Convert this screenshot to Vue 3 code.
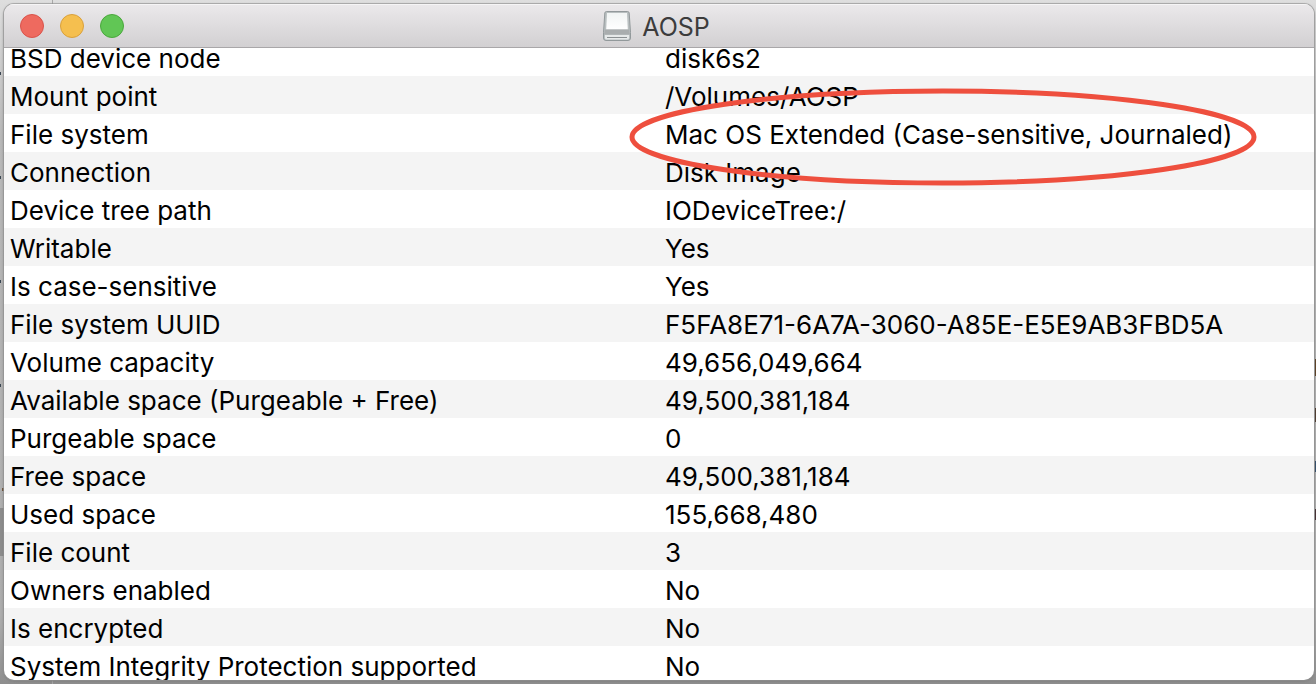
<script setup>
const controls = [
  { name: 'Close', kind: 'close' },
  { name: 'Minimize', kind: 'minimize' },
  { name: 'Zoom', kind: 'zoom' },
]

const rows = [
  { label: 'BSD device node', value: 'disk6s2' },
  { label: 'Mount point', value: '/Volumes/AOSP' },
  { label: 'File system', value: 'Mac OS Extended (Case-sensitive, Journaled)', circled: true },
  { label: 'Connection', value: 'Disk Image' },
  { label: 'Device tree path', value: 'IODeviceTree:/' },
  { label: 'Writable', value: 'Yes' },
  { label: 'Is case-sensitive', value: 'Yes' },
  { label: 'File system UUID', value: 'F5FA8E71-6A7A-3060-A85E-E5E9AB3FBD5A' },
  { label: 'Volume capacity', value: '49,656,049,664' },
  { label: 'Available space (Purgeable + Free)', value: '49,500,381,184' },
  { label: 'Purgeable space', value: '0' },
  { label: 'Free space', value: '49,500,381,184' },
  { label: 'Used space', value: '155,668,480' },
  { label: 'File count', value: '3' },
  { label: 'Owners enabled', value: 'No' },
  { label: 'Is encrypted', value: 'No' },
  { label: 'System Integrity Protection supported', value: 'No' },
]
</script>

<template>
  <div class="desktop">
    <main class="window">
      <header class="titlebar">
        <div class="controls">
          <button
            v-for="c in controls"
            :key="c.kind"
            type="button"
            class="control"
            :class="c.kind"
            :aria-label="c.name"
          ></button>
        </div>
        <h1 class="title">
          <svg class="disk" viewBox="0 0 30 32" width="30" height="32" aria-hidden="true">
            <defs>
              <linearGradient id="disk-top" x1="0" y1="0" x2="0" y2="1">
                <stop offset="0" stop-color="#f1f4f4" />
                <stop offset="1" stop-color="#ffffff" />
              </linearGradient>
            </defs>
            <path
              d="M4.500 1.500H25.500Q27 1.500 27.200 3L28.500 22.500V28Q28.500 30.500 26 30.500H4Q1.500 30.500 1.500 28V22.500L2.800 3Q3 1.500 4.500 1.500Z"
              fill="#b9bfc0"
              stroke="#92999b"
            />
            <path d="M5 3H25L25.800 19.500H4.200Z" fill="url(#disk-top)" />
            <path d="M3 19.500H27L28 24.500H2Z" fill="#a9adae" />
            <path d="M3 25H27V28Q27 29.500 25.500 29.500H4.500Q3 29.500 3 28Z" fill="#e6e9e9" />
            <path d="M5 27.500H25" stroke="#8b9092" />
          </svg>
          <span class="name">AOSP</span>
        </h1>
      </header>
      <section class="content">
        <table class="info">
          <tbody>
            <tr v-for="row in rows" :key="row.label">
              <th scope="row">{{ row.label }}</th>
              <td>
                <span class="value" :class="{ circled: row.circled }">
                  {{ row.value }}
                  <svg
                    v-if="row.circled"
                    class="circle"
                    viewBox="0 0 628 98"
                    width="628"
                    height="98"
                    aria-hidden="true"
                  >
                    <ellipse cx="314" cy="49" rx="311" ry="46" />
                  </svg>
                </span>
              </td>
            </tr>
          </tbody>
        </table>
      </section>
    </main>
  </div>
</template>

<style>
body {
  margin: 0;
}
</style>

<style scoped>
/* Slivers of the windows behind show around the edges. */
.desktop {
  box-sizing: border-box;
  height: 100vh;
  padding: 4px 2px 4px 4px;
  overflow: hidden;
  background:
    linear-gradient(#3a4652, #3a4652) 0 72px / 1px 3px no-repeat,
    linear-gradient(#3a4652, #3a4652) 0 176px / 1px 3px no-repeat,
    linear-gradient(#3a4652, #3a4652) 0 280px / 1px 3px no-repeat,
    linear-gradient(#3a4652, #3a4652) 0 384px / 1px 3px no-repeat,
    linear-gradient(#6b5037, #6b5037) 2px 488px / 2px 3px no-repeat,
    linear-gradient(#8c8c8c, #8c8c8c) 0 508px / 4px 48px no-repeat,
    linear-gradient(#5a3a1c, #5a3a1c) 100% 359px / 1px 17px no-repeat,
    linear-gradient(#4a3628, #4a3628) 100% 408px / 1px 14px no-repeat,
    linear-gradient(#2d4a68, #2d4a68) 100% 461px / 1px 11px no-repeat,
    linear-gradient(#40282c, #40282c) 100% 509px / 1px 11px no-repeat,
    linear-gradient(#a8a8a8, #a8a8a8) 52px 0 / 1px 100% no-repeat,
    linear-gradient(#dedede, #b8b8b8 20%, #adadad 90%, #8e8e8e);
  font-family: Inter, Roboto, "Liberation Sans", sans-serif;
}

.window {
  display: flex;
  flex-direction: column;
  height: 100%;
  overflow: hidden;
  border-radius: 10px;
  background: #fff;
  box-shadow: 0 0 0 1px #92929299, 0 1px 3px #777;
}

.titlebar {
  display: grid;
  grid-template-columns: 1fr auto 1fr;
  flex: none;
  align-items: center;
  box-sizing: border-box;
  height: 44px;
  padding: 0 22px 0 16px;
  border-bottom: 1px solid #a9a7a9;
  background: linear-gradient(#ebe9eb, #d2d0d2);
  box-shadow: inset 0 1px #f6f5f6;
}

.controls {
  display: flex;
  gap: 16px;
}

.control {
  box-sizing: border-box;
  width: 24px;
  height: 24px;
  padding: 0;
  border: 1px solid;
  border-radius: 50%;
}

.close {
  border-color: #d9534b;
  background: #ee6a5f;
}

.minimize {
  border-color: #d9a03c;
  background: #f5bf4f;
}

.zoom {
  border-color: #4aa73c;
  background: #61c655;
}

.title {
  display: flex;
  gap: 10px;
  align-items: center;
  margin: 0;
  color: #3c3c3c;
  font-size: 25px;
  font-weight: 400;
  line-height: 32px;
}

.name {
  padding-top: 2px;
}

.disk {
  display: block;
}

.content {
  flex: 1;
  min-height: 0;
  overflow: hidden;
}

/* The list is shown scrolled down by part of a row. */
.info {
  width: 100%;
  margin-top: -10px;
  border-collapse: collapse;
  table-layout: fixed;
  color: #000;
  font-size: 26px;
  line-height: 34px;
}

.info tr:nth-child(even) {
  background: #f4f4f4;
}

.info th,
.info td {
  padding: 4px 6px 0;
  font-weight: 400;
  text-align: left;
  white-space: nowrap;
}

.value {
  display: block;
}

.circled {
  position: relative;
  z-index: 1;
}

.circle {
  position: absolute;
  top: -30px;
  left: -36px;
  overflow: visible;
  pointer-events: none;
}

.circle ellipse {
  fill: none;
  stroke: #ee4f3e;
  stroke-width: 5;
}
</style>
